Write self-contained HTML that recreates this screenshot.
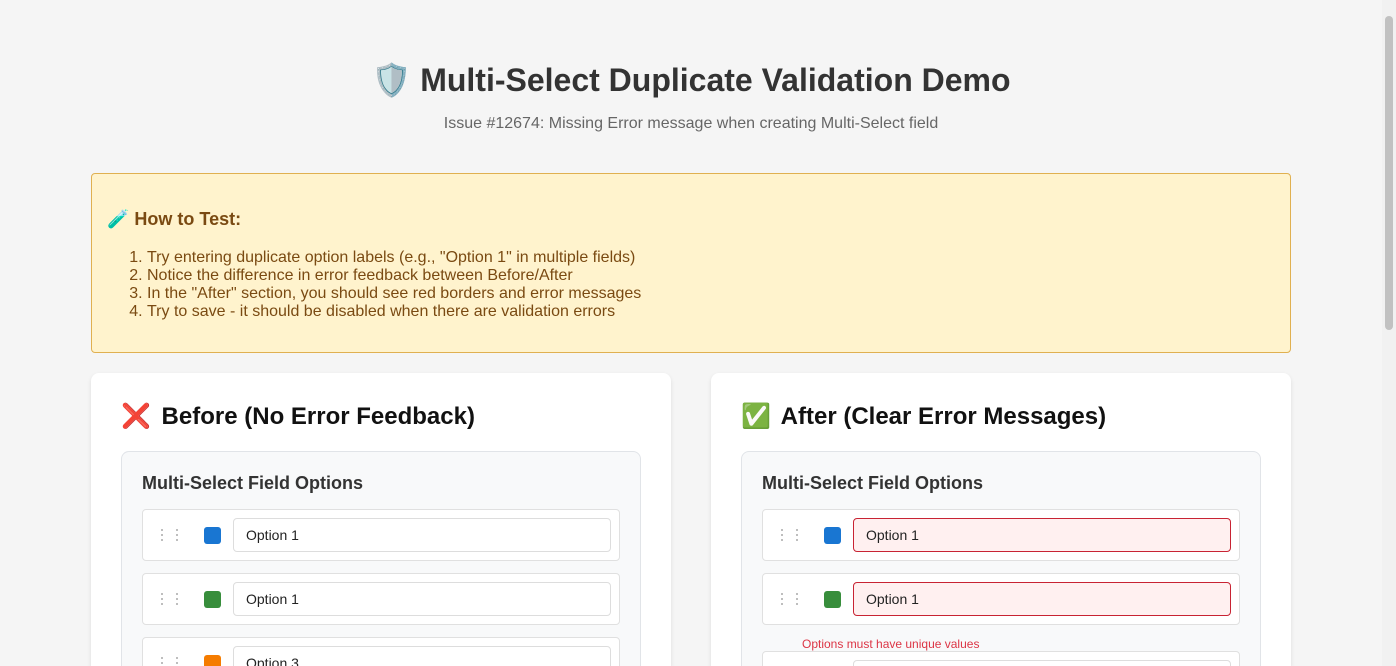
<!DOCTYPE html>
<html><head><meta charset="utf-8"><style>
*{box-sizing:border-box;margin:0;padding:0}
html,body{width:1396px;height:666px;overflow:hidden}
body{background:#f5f5f5;font-family:"Liberation Sans",sans-serif;color:#333;position:relative}
.sb{position:absolute;right:0;top:0;width:14px;height:666px;background:#f1f1f1}
.sb div{position:absolute;left:3px;top:16px;width:8px;height:314px;background:#c1c1c1;border-radius:4px}
h1{position:absolute;left:0;width:1382px;top:60px;text-align:center;font-size:32px;font-weight:bold;color:#333;line-height:40px}
.sub{position:absolute;left:0;width:1382px;top:114px;text-align:center;font-size:16px;color:#666;line-height:20px}
.note{position:absolute;left:91px;top:173px;width:1200px;height:180px;background:#fff3cd;border:1px solid #e0b050;border-radius:4px;color:#856404}
.note h3{position:absolute;left:15px;top:34px;font-size:18px;line-height:22px;color:#7a4a12}
.note ol{position:absolute;left:55px;top:75px;font-size:16px;line-height:18px;color:#7a4a12}
.card{position:absolute;top:373px;width:580px;height:293px;background:#fff;border-radius:8px 8px 0 0;box-shadow:0 2px 4px rgba(0,0,0,.1);overflow:hidden}
.card h2{position:absolute;left:30px;top:29px;font-size:24px;line-height:30px;color:#111}
.card h2 span{margin-right:4px}
.panel{position:absolute;left:30px;top:78px;width:520px;height:300px;background:#f8f9fa;border:1px solid #e1e4e8;border-radius:8px}
.panel h4{position:absolute;left:20px;top:20px;font-size:18px;line-height:22px;color:#333}
.row{position:absolute;left:20px;width:478px;height:52px;background:#fff;border:1px solid #e0e0e0;border-radius:4px}
.drag{position:absolute;left:18px;top:18px;width:18px;height:14px}
.drag i{position:absolute;width:2px;height:2px;background:#aaa;border-radius:1px}
.sq{position:absolute;left:61px;top:17px;width:17px;height:17px;border-radius:3px}
.in{position:absolute;left:90px;top:8px;width:378px;height:34px;border:1px solid #ddd;border-radius:4px;padding-left:12px;font-size:14px;line-height:32px;color:#222}
.err .in{border-color:#c82333;background:#fff0f0}
.msg{position:absolute;left:60px;top:185px;font-size:12px;color:#dc3545;line-height:14px}
</style></head><body>
<div class="sb"><div></div></div>
<h1><span style="font-family:'DejaVu Sans';color:#7fa9bc">🛡️</span> Multi-Select Duplicate Validation Demo</h1>
<div class="sub">Issue #12674: Missing Error message when creating Multi-Select field</div>
<div class="note"><h3><span style="color:#2fb3a0">🧪</span> How to Test:</h3>
<ol><li>Try entering duplicate option labels (e.g., "Option 1" in multiple fields)</li><li>Notice the difference in error feedback between Before/After</li><li>In the "After" section, you should see red borders and error messages</li><li>Try to save - it should be disabled when there are validation errors</li></ol></div>

<div class="card" style="left:91px"><h2><span style="color:#e0383e">❌</span> Before (No Error Feedback)</h2>
<div class="panel"><h4>Multi-Select Field Options</h4>
<div class="row" style="top:57px"><div class="drag"><i style="left:0;top:1px"></i><i style="left:0;top:6px"></i><i style="left:0;top:11px"></i><i style="left:15px;top:1px"></i><i style="left:15px;top:6px"></i><i style="left:15px;top:11px"></i></div><div class="sq" style="background:#1976d2"></div><div class="in">Option 1</div></div>
<div class="row" style="top:121px"><div class="drag"><i style="left:0;top:1px"></i><i style="left:0;top:6px"></i><i style="left:0;top:11px"></i><i style="left:15px;top:1px"></i><i style="left:15px;top:6px"></i><i style="left:15px;top:11px"></i></div><div class="sq" style="background:#388e3c"></div><div class="in">Option 1</div></div>
<div class="row" style="top:185px"><div class="drag"><i style="left:0;top:1px"></i><i style="left:0;top:6px"></i><i style="left:0;top:11px"></i><i style="left:15px;top:1px"></i><i style="left:15px;top:6px"></i><i style="left:15px;top:11px"></i></div><div class="sq" style="background:#f57c00"></div><div class="in">Option 3</div></div>
</div></div>

<div class="card" style="left:711px"><h2><span style="color:#3aa757">✅</span> After (Clear Error Messages)</h2>
<div class="panel"><h4>Multi-Select Field Options</h4>
<div class="row err" style="top:57px"><div class="drag"><i style="left:0;top:1px"></i><i style="left:0;top:6px"></i><i style="left:0;top:11px"></i><i style="left:15px;top:1px"></i><i style="left:15px;top:6px"></i><i style="left:15px;top:11px"></i></div><div class="sq" style="background:#1976d2"></div><div class="in">Option 1</div></div>
<div class="row err" style="top:121px"><div class="drag"><i style="left:0;top:1px"></i><i style="left:0;top:6px"></i><i style="left:0;top:11px"></i><i style="left:15px;top:1px"></i><i style="left:15px;top:6px"></i><i style="left:15px;top:11px"></i></div><div class="sq" style="background:#388e3c"></div><div class="in">Option 1</div></div>
<div class="msg">Options must have unique values</div>
<div class="row" style="top:199px"><div class="in"></div></div>
</div></div>
</body></html>
